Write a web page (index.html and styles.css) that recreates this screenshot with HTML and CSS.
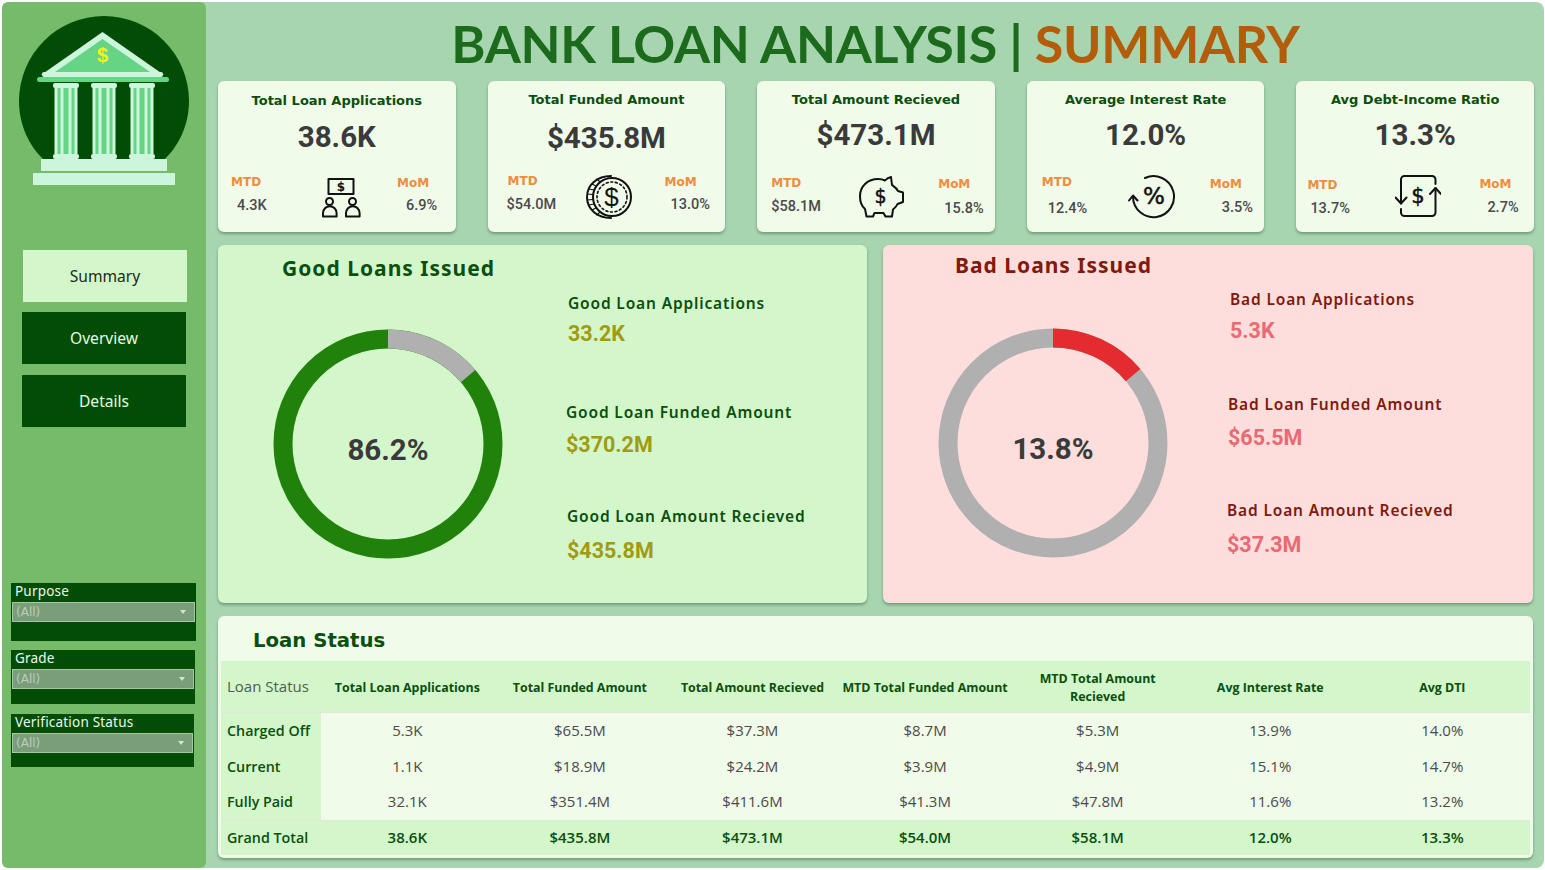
FILE: index.html
```html
<!DOCTYPE html>
<html lang="en">

<head>
    <meta charset="UTF-8">
    <meta name="viewport" content="width=device-width, initial-scale=1.0">
    <title>Bank Loan Analysis | Summary</title>

    <link rel="stylesheet" href="styles.css">
</head>

<body>
    <div class="app">
        <aside class="sidebar">
            <svg class="logo" viewBox="19 14 170 174" width="170" height="174">
                <path d="M19 101a85 85 0 0 1 170 0c0 24-10 45-26 60H45C29 146 19 125 19 101z" fill="#024d06" />
                <path d="M102.500 32L164 75H41z" fill="#cdf5dc" />
                <path d="M102.500 39L150 72H55z" fill="#65d585" />
                <rect x="37" y="77" width="132" height="5" rx="2.500" fill="#65d585" />
                <rect x="42" y="72" width="121" height="5" rx="2" fill="#cdf5dc" />
                <g class="column">
                    <rect x="53" y="83" width="26" height="5" rx="2" fill="#cdf5dc" />
                    <rect x="55" y="88" width="22" height="66" fill="#65d585" />
                    <path d="M56 88v66M62 88v66M70 88v66M76 88v66" stroke="#cdf5dc" stroke-width="3" />
                    <rect x="53" y="154" width="26" height="5" rx="2" fill="#cdf5dc" />
                </g>
                <g class="column">
                    <rect x="91" y="83" width="26" height="5" rx="2" fill="#cdf5dc" />
                    <rect x="93" y="88" width="22" height="66" fill="#65d585" />
                    <path d="M94 88v66M100 88v66M108 88v66M114 88v66" stroke="#cdf5dc" stroke-width="3" />
                    <rect x="91" y="154" width="26" height="5" rx="2" fill="#cdf5dc" />
                </g>
                <g class="column">
                    <rect x="129" y="83" width="26" height="5" rx="2" fill="#cdf5dc" />
                    <rect x="131" y="88" width="22" height="66" fill="#65d585" />
                    <path d="M132 88v66M138 88v66M146 88v66M152 88v66" stroke="#cdf5dc" stroke-width="3" />
                    <rect x="129" y="154" width="26" height="5" rx="2" fill="#cdf5dc" />
                </g>
                <rect x="41" y="159" width="126" height="12" fill="#cdf5dc" />
                <rect x="33" y="173" width="142" height="12" fill="#cdf5dc" />
                <text class="logo-dollar" x="102.500" y="62" text-anchor="middle">$</text>
            </svg>

            <nav class="nav">
                <a class="nav-item nav-active">Summary</a>
                <a class="nav-item">Overview</a>
                <a class="nav-item nav-last">Details</a>
            </nav>

            <div class="filters">
                <div class="filter filter-purpose">
                    <div class="filter-label">Purpose</div>
                    <div class="filter-select">(All)<span class="caret"></span></div>
                </div>
                <div class="filter filter-grade">
                    <div class="filter-label">Grade</div>
                    <div class="filter-select">(All)<span class="caret"></span></div>
                </div>
                <div class="filter filter-status">
                    <div class="filter-label">Verification Status</div>
                    <div class="filter-select">(All)<span class="caret"></span></div>
                </div>
            </div>
        </aside>

        <main class="main">
            <h1 class="title">BANK LOAN ANALYSIS <span class="title-bar">|</span> <span class="title-accent">SUMMARY</span></h1>

            <section class="kpis">
                <div class="kpi kpi-apps">
                    <div class="kpi-head">
                        <h3>Total Loan Applications</h3>
                        <div class="kpi-value">38.6K</div>
                    </div>
                    <div class="kpi-foot">
                        <div class="side side-mtd"><span class="side-label">MTD</span><span class="side-value">4.3K</span></div>
                        <svg class="icon" viewBox="0 0 40 40" width="40" height="40">
                            <rect x="6.500" y="1" width="25" height="15" />
                            <text class="icon-text" x="19" y="13" text-anchor="middle" font-size="12">$</text>
                            <circle cx="7.500" cy="23.500" r="3.500" />
                            <path d="M1 38.500v-3.500a6.800 6.800 0 0 1 13.600 0v3.500z" />
                            <circle cx="30.500" cy="23.500" r="3.500" />
                            <path d="M24 38.500v-3.500a6.800 6.800 0 0 1 13.600 0v3.500z" />
                        </svg>
                        <div class="side side-mom"><span class="side-label">MoM</span><span class="side-value">6.9%</span></div>
                    </div>
                </div>

                <div class="kpi kpi-funded">
                    <div class="kpi-head">
                        <h3>Total Funded Amount</h3>
                        <div class="kpi-value">$435.8M</div>
                    </div>
                    <div class="kpi-foot">
                        <div class="side side-mtd"><span class="side-label">MTD</span><span class="side-value">$54.0M</span></div>
                        <svg class="icon" viewBox="0 0 46 46" width="46" height="46">
                            <path d="M25 2C11 2 1 11 1 23s10 21 24 21" />
                            <path class="thin" d="M3 15l5 1M1.500 20l5 .5M1.500 26l5-.5M3 31l5-1M6 36l4-2M6 10l4 2M11 5l3 3M11 41l3-3" />
                            <circle cx="26" cy="23" r="19" />
                            <circle class="dots" cx="26" cy="23" r="15" />
                            <text class="icon-text icon-light" x="25.500" y="32" text-anchor="middle" font-size="26">$</text>
                        </svg>
                        <div class="side side-mom"><span class="side-label">MoM</span><span class="side-value">13.0%</span></div>
                    </div>
                </div>

                <div class="kpi kpi-received">
                    <div class="kpi-head">
                        <h3>Total Amount Recieved</h3>
                        <div class="kpi-value">$473.1M</div>
                    </div>
                    <div class="kpi-foot">
                        <div class="side side-mtd"><span class="side-label">MTD</span><span class="side-value">$58.1M</span></div>
                        <svg class="icon" viewBox="0 0 47 42" width="47" height="42">
                            <path d="M32 1l1 8c2 1.500 4.500 3 6 6l5 1.500V26l-5.500 2c-1 2.500-2.500 4-4.500 5.500l-1 7h-6.500l-2-3.500h-9l-1.500 3.500H7.500L6 33C2.500 30 1 25.500 1 20.500 1 10 9 3 19 3c2.500 0 5 .5 7 1.500 1.500-2 3.500-3 6-3.500z" />
                            <text class="icon-text icon-mid" x="21.500" y="27" text-anchor="middle" font-size="19">$</text>
                        </svg>
                        <div class="side side-mom"><span class="side-label">MoM</span><span class="side-value">15.8%</span></div>
                    </div>
                </div>

                <div class="kpi kpi-rate">
                    <div class="kpi-head">
                        <h3>Average Interest Rate</h3>
                        <div class="kpi-value">12.0%</div>
                    </div>
                    <div class="kpi-foot">
                        <div class="side side-mtd"><span class="side-label">MTD</span><span class="side-value">12.4%</span></div>
                        <svg class="icon" viewBox="0 0 48 44" width="48" height="44">
                            <path d="M17 3A20.500 20.500 0 1 1 5 22" />
                            <path d="M1 25.500L5 20.500l4.500 5" />
                            <text class="icon-text icon-mid" x="26" y="29" text-anchor="middle" font-size="23">%</text>
                        </svg>
                        <div class="side side-mom"><span class="side-label">MoM</span><span class="side-value">3.5%</span></div>
                    </div>
                </div>

                <div class="kpi kpi-ratio">
                    <div class="kpi-head">
                        <h3>Avg Debt-Income Ratio</h3>
                        <div class="kpi-value">13.3%</div>
                    </div>
                    <div class="kpi-foot">
                        <div class="side side-mtd"><span class="side-label">MTD</span><span class="side-value">13.7%</span></div>
                        <svg class="icon" viewBox="0 0 46 44" width="46" height="44">
                            <path d="M6 28.500V4.500A3.500 3.500 0 0 1 9.500 1H37a3.500 3.500 0 0 1 3.500 3.500V9" />
                            <path d="M6 34v3.500A3.500 3.500 0 0 0 9.500 41H37a3.500 3.500 0 0 0 3.500-3.500V13" />
                            <path d="M.5 22.500l5.500 6 5.500-6M35 19l5.500-6 5.500 6" />
                            <text class="icon-text icon-mid" x="23" y="28" text-anchor="middle" font-size="21">$</text>
                        </svg>
                        <div class="side side-mom"><span class="side-label">MoM</span><span class="side-value">2.7%</span></div>
                    </div>
                </div>
            </section>

            <section class="panels">
                <div class="panel panel-good">
                    <h2>Good Loans Issued</h2>
                    <svg class="ring" viewBox="0 0 230 230" width="230" height="230">
                        <circle class="ring-main" cx="115" cy="115" r="105" />
                        <circle class="ring-part" cx="115" cy="115" r="105" pathLength="100" transform="rotate(-90 115 115)" />
                        <text class="ring-text" x="115" y="131" text-anchor="middle">86.2%</text>
                    </svg>
                    <div class="stats">
                        <div class="stat"><div class="stat-label">Good Loan Applications</div><div class="stat-value">33.2K</div></div>
                        <div class="stat"><div class="stat-label">Good Loan Funded Amount</div><div class="stat-value">$370.2M</div></div>
                        <div class="stat"><div class="stat-label">Good Loan Amount Recieved</div><div class="stat-value">$435.8M</div></div>
                    </div>
                </div>

                <div class="panel panel-bad">
                    <h2>Bad Loans Issued</h2>
                    <svg class="ring" viewBox="0 0 230 230" width="230" height="230">
                        <circle class="ring-main" cx="115" cy="115" r="105" />
                        <circle class="ring-part" cx="115" cy="115" r="105" pathLength="100" transform="rotate(-90 115 115)" />
                        <text class="ring-text" x="115" y="131" text-anchor="middle">13.8%</text>
                    </svg>
                    <div class="stats">
                        <div class="stat"><div class="stat-label">Bad Loan Applications</div><div class="stat-value">5.3K</div></div>
                        <div class="stat"><div class="stat-label">Bad Loan Funded Amount</div><div class="stat-value">$65.5M</div></div>
                        <div class="stat"><div class="stat-label">Bad Loan Amount Recieved</div><div class="stat-value">$37.3M</div></div>
                    </div>
                </div>
            </section>

            <section class="status">
                <h2>Loan Status</h2>
                <table>
                    <thead>
                        <tr>
                            <th class="corner">Loan Status</th>
                            <th>Total Loan Applications</th>
                            <th>Total Funded Amount</th>
                            <th>Total Amount Recieved</th>
                            <th>MTD Total Funded Amount</th>
                            <th>MTD Total Amount<br>Recieved</th>
                            <th>Avg Interest Rate</th>
                            <th class="last-head">Avg DTI</th>
                        </tr>
                    </thead>
                    <tbody>
                        <tr class="row-1">
                            <td>Charged Off</td><td>5.3K</td><td>$65.5M</td><td>$37.3M</td><td>$8.7M</td><td>$5.3M</td><td>13.9%</td><td>14.0%</td>
                        </tr>
                        <tr class="row-2">
                            <td>Current</td><td>1.1K</td><td>$18.9M</td><td>$24.2M</td><td>$3.9M</td><td>$4.9M</td><td>15.1%</td><td>14.7%</td>
                        </tr>
                        <tr class="row-3">
                            <td>Fully Paid</td><td>32.1K</td><td>$351.4M</td><td>$411.6M</td><td>$41.3M</td><td>$47.8M</td><td>11.6%</td><td>13.2%</td>
                        </tr>
                        <tr class="row-total">
                            <td>Grand Total</td><td>38.6K</td><td>$435.8M</td><td>$473.1M</td><td>$54.0M</td><td>$58.1M</td><td>12.0%</td><td>13.3%</td>
                        </tr>
                    </tbody>
                </table>
            </section>
        </main>
    </div>
</body>

</html>
```

FILE: styles.css
```css
/* Basic reset */
* {
    margin: 0;
    padding: 0;
    box-sizing: border-box;
}

body {
    background-color: #fff;
    color: #3a3a3a;
    font-family: "DejaVu Sans", sans-serif;
    overflow: hidden;
}

.app {
    display: flex;
    height: 866px;
    margin: 2px 1px 2px 2px;
    background-color: #a6d5b0;
    border-radius: 8px;
}

/* Sidebar */
.sidebar {
    width: 204px;
    flex: none;
    padding-top: 12px;
    background-color: #76bb69;
    border-radius: 6px;
}

.logo {
    display: block;
    margin-left: 17px;
}

.logo-dollar {
    font-family: "Liberation Sans", sans-serif;
    font-size: 20px;
    font-weight: 700;
    fill: #f6f01e;
}

.nav {
    margin-top: 62px;
    padding-left: 20px;
}

.nav-item {
    display: flex;
    align-items: center;
    justify-content: center;
    width: 164px;
    height: 52px;
    margin-bottom: 10px;
    background-color: #024d06;
    color: #e4f9e2;
    font-family: "Noto Sans", sans-serif;
    font-size: 15.600px;
}

.nav-active {
    margin-left: 1px;
    background-color: #d4f6cb;
    color: #1c2a1a;
}

.nav-last {
    margin-top: 11px;
    margin-bottom: 0;
}

.filters {
    margin-top: 156px;
    padding-left: 9px;
}

.filter {
    background-color: #024d06;
    padding: 0 1px;
}

.filter-purpose {
    width: 185px;
    height: 58px;
    margin-bottom: 9px;
}

.filter-grade {
    width: 184px;
    height: 54px;
    margin-bottom: 10px;
}

.filter-status {
    width: 183px;
    height: 53px;
}

.filter-label {
    height: 19px;
    padding-left: 3px;
    color: #eef8ea;
    font-family: "Noto Sans", sans-serif;
    font-size: 13.500px;
    line-height: 17px;
    letter-spacing: 0.200px;
}

.filter-select {
    display: flex;
    align-items: center;
    justify-content: space-between;
    height: 20px;
    padding: 0 8px 0 3px;
    background-color: #7a9d7a;
    border: 1px solid #a9c4a6;
    color: #bcccb8;
    font-size: 12px;
}

.caret {
    width: 0;
    height: 0;
    border-left: 3px solid transparent;
    border-right: 3px solid transparent;
    border-top: 4px solid #d7e2d4;
}

/* Main column */
.main {
    flex: 1;
    min-width: 0;
    padding: 0 10px 0 12px;
}

.title {
    height: 79px;
    padding-right: 1px;
    color: #1c6a1c;
    font-family: Lato, sans-serif;
    font-size: 52px;
    font-weight: 700;
    line-height: 82px;
    text-align: center;
    letter-spacing: -0.300px;
    white-space: nowrap;
}

.title-accent {
    color: #b35c0a;
}

/* KPI cards */
.kpis {
    display: flex;
    gap: 32px;
}

.kpi {
    flex: 1;
    height: 151px;
    background-color: #f1fbea;
    border-radius: 6px;
    box-shadow: 0 2px 3px rgba(40, 70, 40, 0.4);
}

.kpi-head {
    height: 88px;
    padding-top: 10px;
    text-align: center;
}

.kpi h3 {
    color: #0b4f0d;
    font-size: 13px;
    font-weight: 700;
    line-height: 18px;
}

.kpi-value {
    margin-top: 6px;
    color: #3a3a3a;
    font-family: Roboto, sans-serif;
    font-size: 29.500px;
    font-weight: 700;
    line-height: 40px;
}

.kpi-foot {
    display: grid;
    grid-template-columns: var(--lead) auto 1fr;
}

.icon {
    display: block;
    margin-top: var(--icon-top);
    fill: none;
    stroke: #111;
    stroke-width: 2;
    stroke-linejoin: round;
    stroke-linecap: round;
}

.icon .thin {
    stroke-width: 1.200;
}

.icon .dots {
    stroke-width: 1.600;
    stroke-dasharray: 2 2.600;
}

.icon .icon-text {
    fill: #111;
    stroke: none;
    font-family: "DejaVu Sans", sans-serif;
    font-weight: 700;
}

.icon .icon-light {
    font-family: "Liberation Sans", sans-serif;
    font-weight: 400;
}

.icon .icon-mid {
    stroke: #111;
    stroke-width: 0.500;
    font-weight: 400;
}

.side {
    display: flex;
    flex-direction: column;
    align-items: flex-start;
    font-family: Roboto, sans-serif;
}

.side-label {
    color: #ef8c3d;
    font-family: "DejaVu Sans", sans-serif;
    font-size: 12px;
    font-weight: 700;
    line-height: 16px;
}

.side-value {
    color: #4a4a4a;
    font-size: 14.500px;
    font-weight: 500;
    line-height: 18px;
}

.side-mtd {
    padding-top: var(--mtd-top);
}

.side-mtd .side-label {
    margin-left: var(--mtd-x);
}

.side-mtd .side-value {
    margin-top: var(--mtd-gap);
    margin-left: var(--mtd-val);
}

.side-mom {
    padding-top: var(--mom-top);
}

.side-mom .side-label {
    margin-left: var(--mom-x);
}

.side-mom .side-value {
    margin-top: var(--mom-gap);
    margin-left: var(--mom-val);
}

.kpi-apps {
    --lead: 104px;
    --icon-top: 9px;
    --mtd-top: 5px;
    --mtd-gap: 7px;
    --mtd-x: 13px;
    --mtd-val: 19px;
    --mom-top: 6px;
    --mom-gap: 6px;
    --mom-x: 35px;
    --mom-val: 44px;
}

.kpi-apps .kpi-head {
    padding-top: 11px;
}

.kpi-apps .kpi-value {
    margin-top: 7px;
}

.kpi-funded {
    --lead: 98px;
    --icon-top: 5px;
    --mtd-top: 4px;
    --mtd-gap: 7px;
    --mtd-x: 20px;
    --mtd-val: 19px;
    --mom-top: 5px;
    --mom-gap: 6px;
    --mom-x: 33px;
    --mom-val: 39px;
}

.kpi-funded .kpi-value {
    margin-top: 9px;
}

.kpi-received {
    --lead: 102px;
    --icon-top: 7px;
    --mtd-top: 6px;
    --mtd-gap: 7px;
    --mtd-x: 14px;
    --mtd-val: 14px;
    --mom-top: 7px;
    --mom-gap: 8px;
    --mom-x: 32px;
    --mom-val: 38px;
}

.kpi-rate {
    --lead: 101px;
    --icon-top: 6px;
    --mtd-top: 5px;
    --mtd-gap: 10px;
    --mtd-x: 15px;
    --mtd-val: 21px;
    --mom-top: 7px;
    --mom-gap: 7px;
    --mom-x: 34px;
    --mom-val: 46px;
}

.kpi-ratio {
    --lead: 99px;
    --icon-top: 6px;
    --mtd-top: 8px;
    --mtd-gap: 7px;
    --mtd-x: 11px;
    --mtd-val: 14px;
    --mom-top: 7px;
    --mom-gap: 7px;
    --mom-x: 38px;
    --mom-val: 46px;
}

/* Good and bad loan panels */
.panels {
    display: grid;
    grid-template-columns: 649px 650px;
    gap: 16px;
    margin-top: 13px;
}

.panel {
    display: grid;
    grid-template-columns: var(--ring-col) 1fr;
    grid-template-rows: auto 1fr;
    height: 358px;
    border-radius: 6px;
    box-shadow: 0 2px 3px rgba(40, 70, 40, 0.4);
}

.panel h2 {
    grid-column: 1 / -1;
    font-family: "Noto Sans", sans-serif;
    font-size: 21px;
    font-weight: 700;
    line-height: 26px;
    letter-spacing: 1px;
}

.ring {
    display: block;
    margin-left: var(--ring-x);
}

.ring-main,
.ring-part {
    fill: none;
    stroke-width: 19;
}

.ring-part {
    stroke-dasharray: 13.800 86.200;
}

.ring-text {
    fill: #3a3a3a;
    font-family: Roboto, sans-serif;
    font-size: 29.500px;
    font-weight: 700;
}

.stat-label {
    font-family: "Noto Sans", sans-serif;
    font-size: 15.500px;
    font-weight: 600;
    line-height: 20px;
    letter-spacing: 0.850px;
    white-space: nowrap;
}

.stat-value {
    font-family: Roboto, sans-serif;
    font-size: 21.500px;
    font-weight: 700;
    line-height: 30px;
}

.panel-good {
    --ring-col: 347px;
    --ring-x: 55px;
    background-color: #d4f6cb;
}

.panel-good h2 {
    height: 10px;
    margin-top: 10px;
    padding-left: 64px;
    color: #0b4f0d;
}

.panel-good .ring {
    margin-top: 64px;
}

.panel-good .stats {
    margin-top: 28px;
}

.panel-good .ring-main {
    stroke: #20820a;
}

.panel-good .ring-part {
    stroke: #b0b0b0;
}

.panel-good .stat-label {
    color: #0b4f0d;
}

.panel-good .stat-value {
    color: #a19b12;
}

.panel-good .stat:nth-child(1) {
    margin-left: 3px;
}

.panel-good .stat:nth-child(1) .stat-value {
    margin-top: 6px;
}

.panel-good .stat:nth-child(2) {
    margin-top: 53px;
    margin-left: 1px;
}

.panel-good .stat:nth-child(2) .stat-value {
    margin-top: 8px;
}

.panel-good .stat:nth-child(3) {
    margin-top: 46px;
    margin-left: 2px;
}

.panel-good .stat:nth-child(3) .stat-value {
    margin-top: 10px;
}

.panel-bad {
    --ring-col: 345px;
    --ring-x: 55px;
    background-color: #fedddd;
}

.panel-bad h2 {
    height: 10px;
    margin-top: 7px;
    padding-left: 72px;
    color: #7f1a0c;
}

.panel-bad .ring {
    margin-top: 66px;
}

.panel-bad .stats {
    margin-top: 27px;
}

.panel-bad .ring-main {
    stroke: #b0b0b0;
}

.panel-bad .ring-part {
    stroke: #e32b30;
}

.panel-bad .stat-label {
    color: #7f1a0c;
}

.panel-bad .stat-value {
    color: #e86a72;
}

.panel-bad .stat:nth-child(1) {
    margin-left: 2px;
}

.panel-bad .stat:nth-child(1) .stat-value {
    margin-top: 7px;
}

.panel-bad .stat:nth-child(2) {
    margin-top: 48px;
}

.panel-bad .stat:nth-child(2) .stat-value {
    margin-top: 9px;
}

.panel-bad .stat:nth-child(3) {
    margin-top: 47px;
    margin-left: -1px;
}

.panel-bad .stat:nth-child(3) .stat-value {
    margin-top: 10px;
}

/* Loan status table */
.status {
    height: 242px;
    margin-top: 13px;
    margin-right: 1px;
    padding: 0 3px;
    background-color: #f1fbea;
    border-radius: 6px;
    box-shadow: 0 2px 3px rgba(40, 70, 40, 0.4);
}

.status h2 {
    height: 45px;
    padding-left: 32px;
    color: #0b4f0d;
    font-size: 19.700px;
    font-weight: 700;
    line-height: 49px;
}

.status table {
    width: 100%;
    border-collapse: collapse;
    table-layout: fixed;
    font-family: "Open Sans", sans-serif;
}

.status th {
    width: 172.600px;
    height: 51px;
    padding-top: 3px;
    background-color: #d4f6cb;
    border-bottom: 1px solid #dfe6da;
    color: #0b4f0d;
    font-size: 12.400px;
    font-weight: 700;
    line-height: 18px;
}

.status .corner {
    width: 100px;
    padding-top: 0;
    padding-left: 6px;
    color: #4d5f4d;
    font-size: 15px;
    font-weight: 400;
    text-align: left;
}

.status .last-head {
    width: auto;
}

.status th:last-child,
.status td:last-child {
    padding-right: 2px;
}

.status td {
    padding-bottom: 2px;
    color: #4a4a4a;
    font-size: 15px;
    text-align: center;
}

.status td:first-child {
    padding-bottom: 0;
    padding-left: 6px;
    background-color: #d4f6cb;
    color: #0b4f0d;
    font-size: 14.300px;
    font-weight: 600;
    text-align: left;
    white-space: nowrap;
}

.row-1 td {
    height: 37px;
}

.row-2 td {
    height: 35px;
}

.row-3 td {
    height: 36px;
}

.status .row-total td {
    height: 35px;
    background-color: #d4f6cb;
    border-top: 1px solid #dfe6da;
    color: #0b4f0d;
    font-weight: 600;
}
```
